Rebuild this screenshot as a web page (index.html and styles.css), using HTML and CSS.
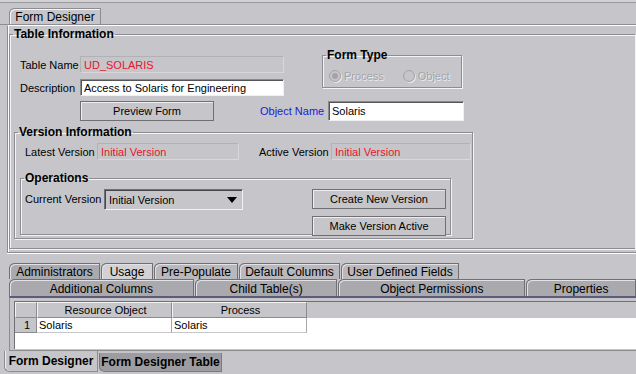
FILE: index.html
```html
<!DOCTYPE html>
<html lang="en">
<head>
    <meta charset="UTF-8">
    <title>Form Designer</title>
    <link rel="stylesheet" href="styles.css">
</head>
<body>
    <div class="app">
        <div class="window-edge"></div>

        <div class="top-tabs">
            <div class="tab main-tab">Form Designer</div>
        </div>

        <div class="designer-panel">
            <fieldset class="group table-info">
                <legend>Table Information</legend>
                <div class="ti-top">
                    <div class="ti-fields">
                        <div class="field-row">
                            <span class="label">Table Name</span>
                            <div class="input disabled">UD_SOLARIS</div>
                        </div>
                        <div class="field-row">
                            <span class="label">Description</span>
                            <div class="input">Access to Solaris for Engineering</div>
                        </div>
                    </div>
                    <fieldset class="group form-type">
                        <legend>Form Type</legend>
                        <div class="radios">
                            <span class="radio checked"></span><span class="radio-text">Process</span>
                            <span class="radio"></span><span class="radio-text">Object</span>
                        </div>
                    </fieldset>
                </div>

                <div class="ti-actions">
                    <button class="btn preview-btn">Preview Form</button>
                    <span class="label object-label">Object Name</span>
                    <div class="input object-input">Solaris</div>
                </div>

                <fieldset class="group version-info">
                    <legend>Version Information</legend>
                    <div class="version-row">
                        <span class="label latest-label">Latest Version</span>
                        <div class="input disabled version-input">Initial Version</div>
                        <span class="label active-label">Active Version</span>
                        <div class="input disabled version-input">Initial Version</div>
                    </div>

                    <fieldset class="group operations">
                        <legend>Operations</legend>
                        <div class="ops-body">
                            <span class="label current-label">Current Version</span>
                            <div class="combo">
                                <span>Initial Version</span>
                                <span class="combo-arrow"></span>
                            </div>
                            <div class="ops-buttons">
                                <button class="btn ops-btn">Create New Version</button>
                                <button class="btn ops-btn">Make Version Active</button>
                            </div>
                        </div>
                    </fieldset>
                </fieldset>
            </fieldset>
        </div>

        <div class="sub-tabs">
            <div class="tab-row first-row">
                <div class="tab sub-tab dark" style="width: 91px">Administrators</div>
                <div class="tab sub-tab light" style="width: 52px">Usage</div>
                <div class="tab sub-tab mid" style="width: 84px">Pre-Populate</div>
                <div class="tab sub-tab mid" style="width: 101px">Default Columns</div>
                <div class="tab sub-tab mid" style="width: 118px">User Defined Fields</div>
            </div>
            <div class="tab-row">
                <div class="tab sub-tab dark" style="width: 185px">Additional Columns</div>
                <div class="tab sub-tab dark" style="width: 143px">Child Table(s)</div>
                <div class="tab sub-tab dark" style="width: 187px">Object Permissions</div>
                <div class="tab sub-tab dark" style="width: 110px">Properties</div>
            </div>
        </div>

        <div class="table-panel">
            <div class="table-view">
                <div class="grid-head">
                    <div class="cell head num"></div>
                    <div class="cell head col">Resource Object</div>
                    <div class="cell head col">Process</div>
                </div>
                <div class="grid-row">
                    <div class="cell num row-num">1</div>
                    <div class="cell col">Solaris</div>
                    <div class="cell col">Solaris</div>
                </div>
            </div>
        </div>

        <div class="bottom-tabs">
            <div class="tab bottom-tab selected">Form Designer</div>
            <div class="tab bottom-tab other">Form Designer Table</div>
        </div>
    </div>
</body>
</html>
```

FILE: styles.css
```css
:root {
    --bg: #c6c6ca;
    --dark-line: #8c8c91;
    --darker-line: #6f6f74;
    --light-line: #f4f4f6;
    --tab-dark: #a9a9ae;
    --tab-mid: #b9b9bd;
    --tab-light: #d2d2d6;
    --red: #e8132c;
    --blue: #1a1adc;
}

* {
    margin: 0;
    padding: 0;
    box-sizing: border-box;
}

body {
    background-color: var(--bg);
    font-family: 'Liberation Sans', Arial, sans-serif;
    font-size: 11px;
    color: #000;
}

.app {
    width: 636px;
    height: 374px;
    overflow: hidden;
    background-color: var(--bg);
}

.window-edge {
    height: 3px;
    background-color: #d2d2d6;
    border-bottom: 1px solid #9a9a9f;
}

/* top tab */
.top-tabs {
    display: flex;
    padding: 5px 0 0 9px;
    height: 22px;
    border-bottom: 1px solid var(--dark-line);
}

.tab {
    display: flex;
    align-items: center;
    justify-content: center;
    white-space: nowrap;
    font-size: 12px;
}

.main-tab {
    width: 92px;
    height: 16px;
    border: 1px solid var(--dark-line);
    border-bottom: none;
    border-top-left-radius: 6px 5px;
    box-shadow: inset 1px 1px 0 var(--light-line);
    padding-top: 1px;
}

/* main panel */
.designer-panel {
    margin-left: 7px;
    height: 228px;
    border-top: 1px solid #fff;
    border-left: 1px solid var(--dark-line);
    border-bottom: 1px solid var(--dark-line);
    box-shadow: inset 1px 0 0 #fff, 0 1px 0 #fff;
    padding-top: 1px;
}

.group {
    border: 1px solid var(--dark-line);
    box-shadow: inset 1px 1px 0 var(--light-line), 1px 1px 0 var(--light-line);
    margin: 0;
    padding: 0;
    min-width: 0;
}

.group legend {
    font-size: 12px;
    font-weight: bold;
    line-height: 14px;
    padding: 0 1px;
    margin-left: 3px;
}

.table-info {
    margin-left: 1px;
    width: 626px;
    height: 222px;
    border-right: none;
}

.ti-top {
    display: flex;
    align-items: flex-start;
}

.ti-fields {
    display: flex;
    flex-direction: column;
    gap: 6px;
    margin-top: 15px;
    padding-left: 10px;
}

.field-row {
    display: flex;
    align-items: center;
}

.field-row .label {
    width: 60px;
}

.label {
    white-space: nowrap;
}

.input {
    height: 17px;
    width: 204px;
    background-color: #fff;
    border: 1px solid #8a8a8e;
    border-right-color: #f0f0f2;
    border-bottom-color: #f0f0f2;
    box-shadow: inset 1px 1px 0 #55555a;
    padding: 2px 0 0 3px;
    white-space: nowrap;
    overflow: hidden;
}

.input.disabled {
    background-color: var(--bg);
    color: var(--red);
    border: 1px solid #b2b2b6;
    border-right-color: #d8d8dc;
    border-bottom-color: #d8d8dc;
    box-shadow: none;
}

.form-type {
    width: 140px;
    height: 40px;
    margin: 7px 0 0 38px;
}

.radios {
    display: flex;
    align-items: center;
    padding: 8px 0 0 6px;
    color: #a4a4a8;
    text-shadow: 1px 1px 0 #ececee;
}

.radio {
    flex-shrink: 0;
    width: 12px;
    height: 12px;
    border-radius: 50%;
    border: 1px solid #a4a4a8;
    box-shadow: 1px 1px 0 #ececee;
    position: relative;
    margin-right: 3px;
}

.radio.checked::after {
    content: '';
    position: absolute;
    left: 2px;
    top: 2px;
    width: 6px;
    height: 6px;
    border-radius: 50%;
    background-color: #a4a4a8;
}

.radio-text {
    margin-right: 19px;
}

.ti-actions {
    display: flex;
    align-items: center;
    margin-top: 5px;
    padding-left: 70px;
}

.btn {
    height: 20px;
    background-color: var(--bg);
    border: 1px solid var(--darker-line);
    box-shadow: inset 1px 1px 0 #ededf0;
    font-family: 'Liberation Sans', Arial, sans-serif;
    font-size: 11px;
    color: #000;
}

.preview-btn {
    width: 134px;
}

.object-label {
    color: var(--blue);
    margin-left: 46px;
    width: 68px;
}

.object-input {
    width: 136px;
    height: 20px;
    padding-top: 3px;
}

.version-info {
    margin: 4px 0 0 4px;
    width: 459px;
    height: 114px;
}

.version-row {
    display: flex;
    align-items: center;
    margin-top: 4px;
    padding-left: 10px;
}

.latest-label {
    width: 72px;
}

.version-input {
    width: 142px;
}

.active-label {
    margin-left: 20px;
    width: 72px;
}

.version-input + .active-label + .version-input {
    width: 140px;
}

.operations {
    margin: 11px 0 0 5px;
    width: 431px;
    height: 64px;
}

.ops-body {
    display: flex;
    align-items: flex-start;
    padding: 4px 0 0 4px;
}

.current-label {
    width: 79px;
    padding-top: 4px;
}

.combo {
    display: flex;
    align-items: center;
    justify-content: space-between;
    width: 139px;
    height: 21px;
    border: 1px solid var(--darker-line);
    border-right-color: #f0f0f2;
    border-bottom-color: #f0f0f2;
    box-shadow: inset 1px 1px 0 #48484c;
    padding: 0 5px 0 4px;
}

.combo-arrow {
    width: 0;
    height: 0;
    border-left: 5px solid transparent;
    border-right: 5px solid transparent;
    border-top: 6px solid #000;
}

.ops-buttons {
    display: flex;
    flex-direction: column;
    gap: 7px;
    margin-left: 69px;
}

.ops-btn {
    width: 134px;
}

/* sub tabs */
.sub-tabs {
    margin-top: 10px;
    padding-left: 9px;
}

.tab-row {
    display: flex;
    gap: 1px;
}

.sub-tab {
    height: 17px;
    border: 1px solid var(--darker-line);
    border-bottom: none;
    border-top-left-radius: 6px 5px;
    box-shadow: inset 1px 1px 0 #e2e2e6;
    padding-top: 1px;
}

.first-row .sub-tab {
    height: 16px;
}

.sub-tab.dark {
    background-color: var(--tab-dark);
}

.sub-tab.mid {
    background-color: var(--tab-mid);
}

.sub-tab.light {
    background-color: var(--tab-light);
}

/* table */
.table-panel {
    margin-left: 9px;
    height: 55px;
    border-top: 2px solid #5c5c7a;
    border-left: 1px solid var(--dark-line);
    border-bottom: 1px solid var(--dark-line);
    padding: 3px 0 1px 4px;
}

.table-view {
    height: 48px;
    background-color: #fff;
    border-left: 1px solid var(--darker-line);
    border-top: 1px solid var(--darker-line);
}

.grid-head {
    display: flex;
    height: 16px;
    background-color: var(--bg);
}

.grid-row {
    display: flex;
    height: 15px;
}

.cell {
    display: flex;
    align-items: center;
    white-space: nowrap;
}

.cell.num {
    width: 22px;
    justify-content: flex-end;
    padding-right: 6px;
}

.cell.col {
    width: 135px;
    padding-left: 2px;
    border-right: 1px solid #a8a8ac;
    border-bottom: 1px solid #c8c8cc;
}

.cell.head {
    justify-content: center;
    background-color: var(--bg);
    border: 1px solid #8c8c90;
    border-top-color: #f2f2f4;
    border-left-color: #f2f2f4;
}

.row-num {
    background-color: var(--bg);
    border-right: 1px solid #8c8c90;
    border-bottom: 1px solid #8c8c90;
}

/* bottom tabs */
.bottom-tabs {
    display: flex;
    align-items: flex-start;
    padding-left: 4px;
    height: 24px;
}

.bottom-tab {
    font-weight: bold;
    height: 21px;
    border-bottom-left-radius: 6px 5px;
}

.bottom-tab.selected {
    width: 94px;
    border-left: 1px solid var(--dark-line);
    border-bottom: 1px solid var(--dark-line);
    border-right: 1px solid var(--dark-line);
    box-shadow: inset 1px 0 0 #eeeef0;
}

.bottom-tab.other {
    width: 123px;
    margin-left: 1px;
    margin-top: 2px;
    height: 19px;
    background-color: #9c9ca1;
    border: 1px solid #7a7a7f;
    border-top: none;
}
```
